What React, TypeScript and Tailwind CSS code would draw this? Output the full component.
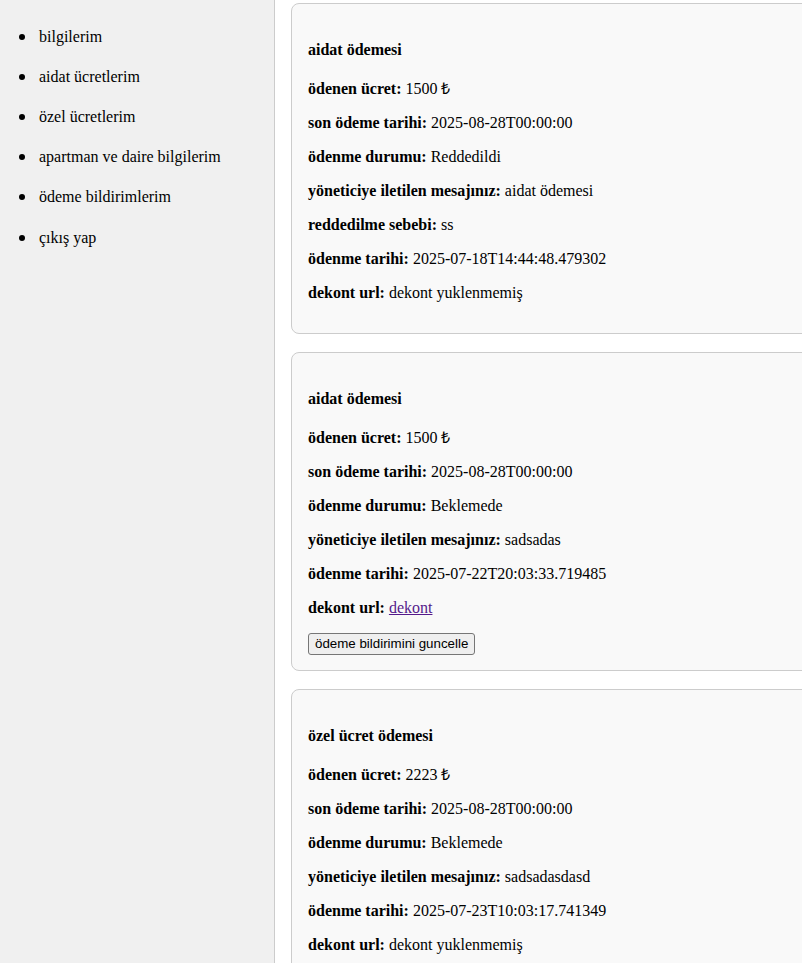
import React from "react";

type Row = { label: string; value: string; link?: boolean };
type Payment = { title: string; rows: Row[]; canEdit?: boolean };

const menu = [
  "bilgilerim",
  "aidat ücretlerim",
  "özel ücretlerim",
  "apartman ve daire bilgilerim",
  "ödeme bildirimlerim",
  "çıkış yap",
];

const payments: Payment[] = [
  {
    title: "aidat ödemesi",
    rows: [
      { label: "ödenen ücret:", value: "1500 ₺" },
      { label: "son ödeme tarihi:", value: "2025-08-28T00:00:00" },
      { label: "ödenme durumu:", value: "Reddedildi" },
      { label: "yöneticiye iletilen mesajınız:", value: "aidat ödemesi" },
      { label: "reddedilme sebebi:", value: "ss" },
      { label: "ödenme tarihi:", value: "2025-07-18T14:44:48.479302" },
      { label: "dekont url:", value: "dekont yuklenmemiş" },
    ],
  },
  {
    title: "aidat ödemesi",
    canEdit: true,
    rows: [
      { label: "ödenen ücret:", value: "1500 ₺" },
      { label: "son ödeme tarihi:", value: "2025-08-28T00:00:00" },
      { label: "ödenme durumu:", value: "Beklemede" },
      { label: "yöneticiye iletilen mesajınız:", value: "sadsadas" },
      { label: "ödenme tarihi:", value: "2025-07-22T20:03:33.719485" },
      { label: "dekont url:", value: "dekont", link: true },
    ],
  },
  {
    title: "özel ücret ödemesi",
    rows: [
      { label: "ödenen ücret:", value: "2223 ₺" },
      { label: "son ödeme tarihi:", value: "2025-08-28T00:00:00" },
      { label: "ödenme durumu:", value: "Beklemede" },
      { label: "yöneticiye iletilen mesajınız:", value: "sadsadasdasd" },
      { label: "ödenme tarihi:", value: "2025-07-23T10:03:17.741349" },
      { label: "dekont url:", value: "dekont yuklenmemiş" },
    ],
  },
];

function PaymentCard({ p }: { p: Payment }) {
  return (
    <div className="w-[600px] shrink-0 rounded-lg border border-[#cccccc] bg-[#f9f9f9] px-4 pt-4 pb-[15px]">
      <h4 className="mt-[21px] mb-[21px] font-bold leading-[18px]">{p.title}</h4>
      {p.rows.map((r) => (
        <p key={r.label} className="my-4 leading-[18px]">
          <strong>{r.label}</strong>{" "}
          {r.link ? (
            <a href="#" className="text-[#551a8b] underline">
              {r.value}
            </a>
          ) : (
            r.value
          )}
        </p>
      ))}
      {p.canEdit && (
        <button className="block rounded-[3px] border border-[#767676] bg-[#efefef] px-[6px] py-[2px] font-['Liberation_Sans',Arial,sans-serif] text-[13.33px] leading-[16px] text-black">
          ödeme bildirimini guncelle
        </button>
      )}
    </div>
  );
}

export default function App() {
  return (
    <div className="flex h-[963px] w-[802px] overflow-hidden bg-white font-['Liberation_Serif','Times_New_Roman',serif] text-[16px] text-black">
      <aside className="w-[275px] shrink-0 border-r border-[#cccccc] bg-[#f0f0f0]">
        <ul className="mt-[17px] pl-[19px]">
          {menu.map((m, i) => (
            <li
              key={m}
              className={`flex items-center py-[11px] leading-[18px] ${i === menu.length - 1 ? "mt-px" : ""}`}
            >
              <span className="h-[6px] w-[6px] shrink-0 rounded-full bg-black" />
              <span className="ml-[14px]">{m}</span>
            </li>
          ))}
        </ul>
      </aside>
      <main className="flex flex-col gap-[18px] pl-4 pt-[3px]">
        {payments.map((p, i) => (
          <PaymentCard key={i} p={p} />
        ))}
      </main>
    </div>
  );
}
